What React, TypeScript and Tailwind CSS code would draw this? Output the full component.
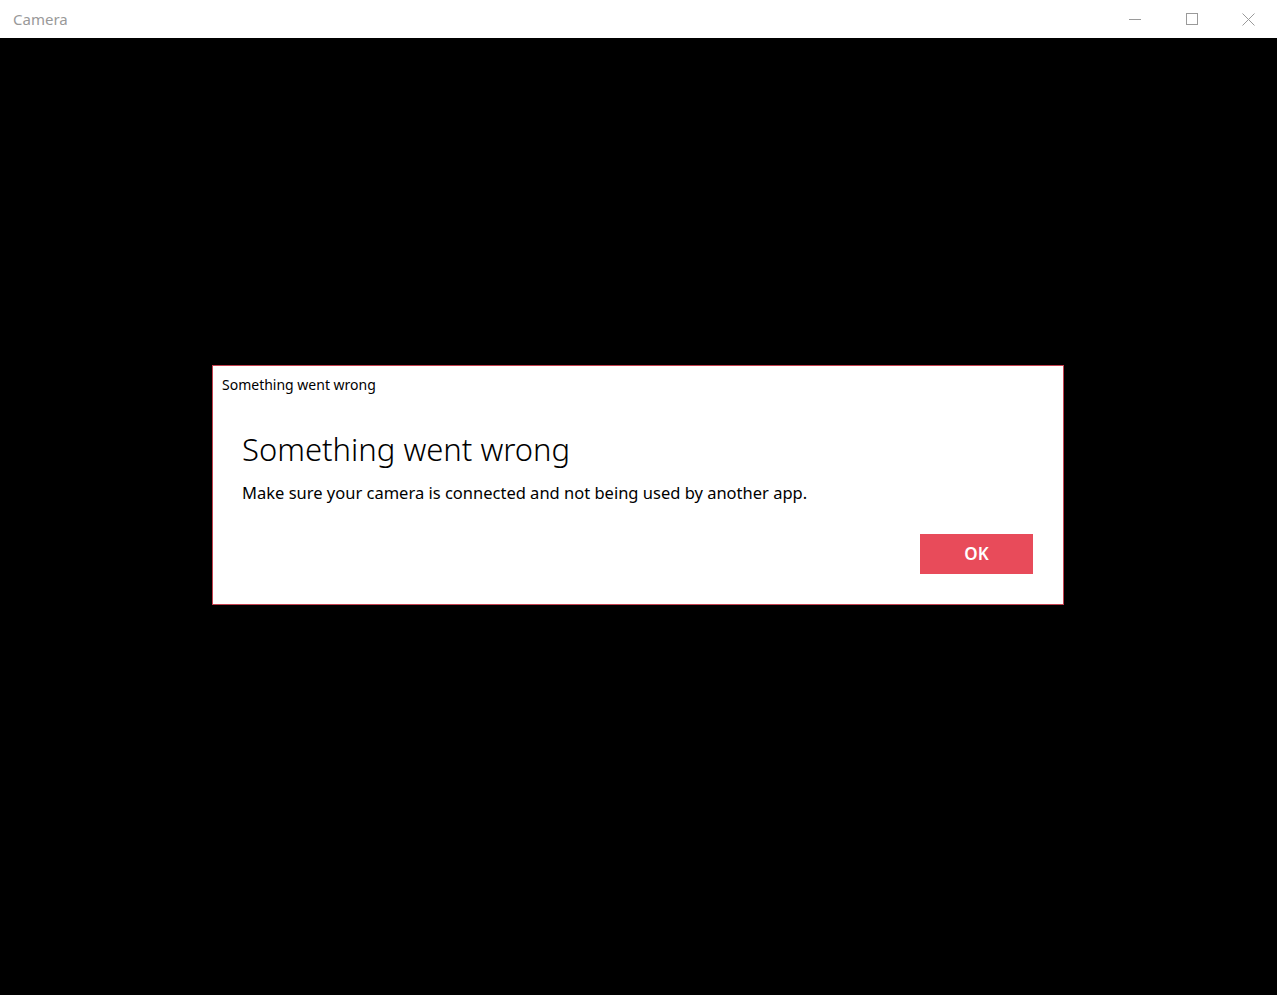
export default function App() {
  return (
    <div className="w-[1277px] h-[995px] flex flex-col bg-black overflow-hidden" style={{ fontFamily: '"Noto Sans", "Open Sans", sans-serif' }}>
      {/* Title bar */}
      <div className="h-[38px] bg-white flex items-center justify-between shrink-0">
        <span className="pl-[13px] text-[15px] text-[#999999]">Camera</span>
        <div className="flex h-full">
          <div className="w-[57px] h-full flex items-center justify-center">
            <svg width="12" height="12" viewBox="0 0 12 12"><path d="M0 6.5h12" stroke="#9a9a9a" strokeWidth="1" /></svg>
          </div>
          <div className="w-[57px] h-full flex items-center justify-center">
            <svg width="12" height="12" viewBox="0 0 12 12"><rect x="0.5" y="0.5" width="11" height="11" fill="none" stroke="#9a9a9a" strokeWidth="1" /></svg>
          </div>
          <div className="w-[57px] h-full flex items-center justify-center">
            <svg width="13" height="13" viewBox="0 0 13 13"><path d="M0.5 0.5l12 12M12.5 0.5l-12 12" stroke="#9a9a9a" strokeWidth="1" /></svg>
          </div>
        </div>
      </div>

      {/* Content */}
      <div className="flex-1 flex pl-[212px] pt-[327px]">
        <div className="w-[852px] h-[240px] bg-white border border-[#c4414f] flex flex-col">
          <div className="pl-[9px] pt-[9px] text-[14px] leading-[20px] text-black">Something went wrong</div>
          <div className="pl-[29px] pt-[34px]">
            <h1 className="text-[31px] leading-[40px] font-light text-black">Something went wrong</h1>
            <p className="text-[16.5px] leading-[24px] text-black mt-[12px]">Make sure your camera is connected and not being used by another app.</p>
          </div>
          <div className="flex justify-end pr-[30px] mt-[29px]">
            <button className="w-[113px] h-[40px] bg-[#e84b5a] text-white text-[17px] font-semibold">OK</button>
          </div>
        </div>
      </div>
    </div>
  );
}
